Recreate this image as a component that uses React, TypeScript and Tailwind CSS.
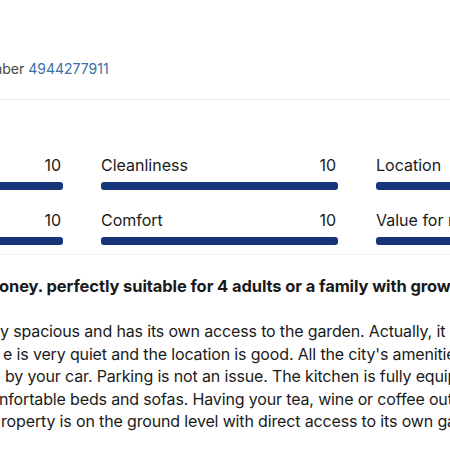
import React from "react";

interface Score {
  label: string;
  value: number;
}

const scores: Score[] = [
  { label: "Staff", value: 10 },
  { label: "Cleanliness", value: 10 },
  { label: "Location", value: 10 },
  { label: "Facilities", value: 10 },
  { label: "Comfort", value: 10 },
  { label: "Value for money", value: 10 },
];

const lines = [
  { text: "y spacious and has its own access to the garden. Actually, it", cls: "ml-0" },
  { text: "e is very quiet and the location is good. All the city's amenities", cls: "ml-[3px]" },
  { text: "by your car. Parking is not an issue. The kitchen is fully equipped", cls: "ml-[5px]" },
  { text: "nfortable beds and sofas. Having your tea, wine or coffee outside", cls: "-ml-[1px]" },
  { text: "roperty is on the ground level with direct access to its own garden.", cls: "ml-[1px]" },
];

export default function App() {
  return (
    <div className="w-[450px] h-[450px] overflow-hidden bg-white text-[#1a1a1a] font-['Inter',sans-serif]">
      {/* registration */}
      <div className="h-[100px] pt-[59px] border-b border-[#ececec] whitespace-nowrap text-[14px] leading-[20px]">
        <span className="-ml-[10px] text-[#474747]">mber </span>
        <span className="text-[#3a6ea5]">4944277911</span>
      </div>

      {/* category scores */}
      <div className="pt-[53px] pb-[9px] border-b border-[#f3f3f3]">
        <div className="grid grid-cols-3 gap-x-[38px] gap-y-[18px] w-[787px] -ml-[174px]">
          {scores.map((s) => (
            <div key={s.label}>
              <div className="flex justify-between text-[16px] leading-[24px]">
                <span>{s.label}</span>
                <span className="pr-[2px]">{s.value}</span>
              </div>
              <div className="mt-[5px] h-[8px] rounded-[3px] bg-[#163679]" />
            </div>
          ))}
        </div>
      </div>

      {/* review */}
      <div className="pt-[19px] whitespace-nowrap">
        <h3 className="-ml-[1px] text-[16.5px] leading-[24px] font-bold tracking-[-0.1px]">
          oney. perfectly suitable for 4 adults or a family with grown up children
        </h3>
        <div className="mt-[22px] text-[16px] leading-[22.5px] tracking-[-0.15px]">
          {lines.map((l) => (
            <p key={l.text} className={l.cls}>
              {l.text}
            </p>
          ))}
        </div>
      </div>
    </div>
  );
}
